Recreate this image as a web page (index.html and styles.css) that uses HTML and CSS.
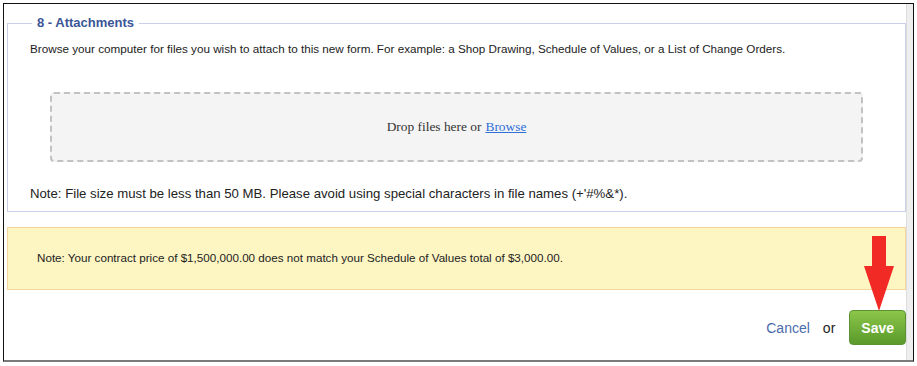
FILE: index.html
```html
<!DOCTYPE html>
<html lang="en">

<head>
    <meta charset="UTF-8">
    <meta name="viewport" content="width=device-width, initial-scale=1.0">
    <title>Attachments</title>
    <link rel="stylesheet" href="styles.css">
</head>

<body>
    <div class="frame">
        <div class="content">
            <fieldset class="section">
                <legend>8 - Attachments</legend>

                <p class="intro">Browse your computer for files you wish to attach to this new form. For example: a Shop Drawing, Schedule of Values, or a List of Change Orders.</p>

                <!-- Zona para soltar archivos -->
                <div class="dropzone">
                    Drop files here or <a href="#">Browse</a>
                </div>

                <p class="note">Note: File size must be less than 50 MB. Please avoid using special characters in file names (+'#%&amp;*).</p>
            </fieldset>

            <div class="warning">
                Note: Your contract price of $1,500,000.00 does not match your Schedule of Values total of $3,000.00.
            </div>

            <div class="actions">
                <a href="#" class="btnCancel">Cancel</a>
                <span class="or">or</span>
                <button class="btnSave">Save</button>
            </div>

            <!-- Flecha roja sobre el boton -->
            <svg class="arrow" width="32" height="76" viewBox="0 0 32 76">
                <polygon points="9,0 23,0 23,30 31,30 16,75 1,30 9,30" fill="#f22a25" />
            </svg>
        </div>
        <div class="scrollbar"></div>
    </div>
</body>

</html>
```

FILE: styles.css
```css
body {
    margin: 0;
    background-color: #ffffff;
    font-family: "Liberation Sans", Arial, sans-serif;
    color: #222222;
}

.frame {
    display: flex;
    margin: 3px 3px 0 3px;
    height: 359px;
    box-sizing: border-box;
    border: 1px solid #111111;
    border-bottom: 2px solid #7a7a7a;
}

.content {
    flex: 1;
    position: relative;
    padding: 0 0 0 3px;
}

.scrollbar {
    width: 6px;
    background-color: #eeeeee;
    border-left: 1px solid #dddddd;
}

.section {
    margin: 11px 0 0 0;
    padding: 0 22px 9px 22px;
    border: 1px solid #c9cfe9;
}

.section legend {
    margin-left: 2px;
    padding: 0 5px;
    font-size: 13px;
    font-weight: bold;
    line-height: 16px;
    color: #3b5597;
}

.intro {
    margin: 10px 0 0 0;
    font-size: 11.7px;
    line-height: 16px;
}

.dropzone {
    display: flex;
    justify-content: center;
    align-items: center;
    height: 66px;
    margin: 35px 20px 0 20px;
    background-color: #f4f4f4;
    border: 2px dashed #c2c2c2;
    border-radius: 4px;
    font-family: "Liberation Serif", "Times New Roman", serif;
    font-size: 13.4px;
    color: #333333;
}

.dropzone a {
    margin-left: 4px;
    color: #2f6fd8;
}

.note {
    margin: 24px 0 0 0;
    font-size: 13.2px;
    line-height: 16px;
}

.warning {
    margin-top: 15px;
    padding: 22px 20px 23px 29px;
    background-color: #fdf5c2;
    border: 1px solid #f6d49e;
    font-size: 11.65px;
    line-height: 16px;
}

.actions {
    display: flex;
    justify-content: flex-end;
    align-items: center;
    margin-top: 20px;
}

.btnCancel {
    font-size: 14px;
    color: #4b6cab;
    text-decoration: none;
}

.or {
    margin: 0 14px 0 13px;
    font-size: 14px;
    color: #222222;
}

.btnSave {
    height: 35px;
    padding: 0 11px;
    font-family: "Liberation Sans", Arial, sans-serif;
    font-size: 14px;
    font-weight: bold;
    color: #ffffff;
    background: linear-gradient(#8cc64a, #5a9a2b);
    border: 1px solid #5b9232;
    border-radius: 4px;
    cursor: pointer;
}

.arrow {
    position: absolute;
    left: 859px;
    top: 232px;
}
```
